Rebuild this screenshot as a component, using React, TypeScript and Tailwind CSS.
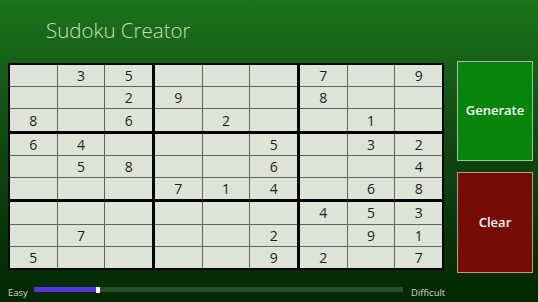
import React from 'react';

const board: string[][] = [
  ['', '3', '5', '', '', '', '7', '', '9'],
  ['', '', '2', '9', '', '', '8', '', ''],
  ['8', '', '6', '', '2', '', '', '1', ''],
  ['6', '4', '', '', '', '5', '', '3', '2'],
  ['', '5', '8', '', '', '6', '', '', '4'],
  ['', '', '', '7', '1', '4', '', '6', '8'],
  ['', '', '', '', '', '', '4', '5', '3'],
  ['', '7', '', '', '', '2', '', '9', '1'],
  ['5', '', '', '', '', '9', '2', '', '7'],
];

function Box({ br, bc }: { br: number; bc: number }) {
  const cells = [];
  for (let r = 0; r < 3; r++) {
    for (let c = 0; c < 3; c++) {
      const v = board[br * 3 + r][bc * 3 + c];
      cells.push(
        <div key={`${r}-${c}`} className="bg-[#dde3d7] flex items-center justify-center text-[14px] text-[#1e1e1e]">
          {v}
        </div>
      );
    }
  }
  return <div className="grid grid-cols-3 grid-rows-3 gap-[1px] bg-[#5a6956]">{cells}</div>;
}

export default function App() {
  return (
    <div
      className="w-[538px] h-[302px] overflow-hidden flex flex-col bg-gradient-to-b from-[#1c741c] via-[#114a11] via-45% to-[#032703]"
      style={{ fontFamily: '"Open Sans", "Noto Sans", sans-serif' }}
    >
      <header className="h-[61px] pl-[46px] pt-[20px]">
        <h1 className="text-[20.5px] font-light leading-none text-[#c6dfc2]">Sudoku Creator</h1>
      </header>

      <div className="flex items-start">
        <div className="ml-[8px] mt-[2px] w-[436px] h-[207px] border-2 border-black bg-black grid grid-cols-3 grid-rows-3 gap-[3px]">
          {[0, 1, 2].map((br) => [0, 1, 2].map((bc) => <Box key={`${br}${bc}`} br={br} bc={bc} />))}
        </div>

        <div className="ml-[13px] w-[76px] flex flex-col gap-[11px]">
          <button className="h-[100px] bg-[#05850a] border border-[#a9bea9] text-white text-[13px] font-semibold">
            Generate
          </button>
          <button className="h-[101px] bg-[#740b05] border border-[#b89a98] text-white text-[13px] font-semibold">
            Clear
          </button>
        </div>
      </div>

      <div className="mt-[9px] flex items-center pl-[8px] text-[9.5px] text-[#d3ddd3]">
        <span className="w-[26px] leading-none mt-[6px]">Easy</span>
        <div className="relative w-[369px] h-[5px] bg-[#2c4a2c]">
          <div className="absolute left-0 top-0 h-full w-[62px] bg-[#5c34d6]" />
          <div className="absolute left-[62px] top-[-0.5px] h-[6px] w-[4px] bg-white" />
        </div>
        <span className="ml-[8px] leading-none mt-[6px]">Difficult</span>
      </div>
    </div>
  );
}
